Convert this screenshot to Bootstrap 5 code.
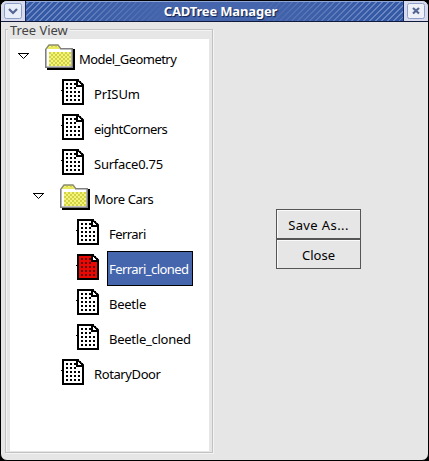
<!DOCTYPE html>
<html lang="en">
<head>
<meta charset="utf-8">
<title>CADTree Manager</title>
<link href="https://cdn.jsdelivr.net/npm/bootstrap@5.3.0/dist/css/bootstrap.min.css" rel="stylesheet">
<style>
body{background:#000;font:14px/20px "Noto Sans","Open Sans",sans-serif;color:#000;overflow:hidden}
.window{width:429px;height:461px;background:#e6e6e6;border:1px solid #000;border-radius:7px;overflow:hidden}
.titlebar{height:21px;background:#d7daec;border-bottom:1px solid #111a3a}
.ctl{width:24px;padding:2px 0 0 3px;flex:none}
.ctl svg{display:block}
.caption-area{border:solid #16275c;border-width:0 1px;color:#fff;font-weight:700;font-size:13px;letter-spacing:-.16px;padding-left:12px;text-shadow:1px 1px 1px #10204f;
 background:linear-gradient(90deg,transparent 5%,#4565ac 38%,#4565ac 60%,transparent 95%),repeating-linear-gradient(135deg,#3459a5 0 2px,#6d87c2 2px 3px,#3459a5 3px 4.24px);box-shadow:inset 0 1px #8fa6d8}
.tree-frame{width:208px;height:424px;margin:7px 0 0 4px;border:1px solid #c2c2c2;box-shadow:inset 1px 1px #f4f4f4,1px 1px #f4f4f4;padding:9px 2px 2px 4px}
.frame-title{left:2px;top:-6px;padding:0 2px;background:#e6e6e6;font-size:13px;line-height:13px;letter-spacing:-.05px;color:#444}
.tree{background:#fff;height:412px;width:199px;padding-top:2px}
.node{height:35px;padding-left:8px}
.level1{padding-left:52px}.level1.open{padding-left:23px}.level2{padding-left:67px}
.twist{width:12px;margin:12px 15px 0 0;flex:none}
.glyph{flex:none;margin-top:3px;overflow:visible}
.label{height:35px;padding:0 0 0 1px;border:1px solid transparent;margin-left:8px;white-space:nowrap;font-size:13px;line-height:34px;letter-spacing:-.35px}
.folder-label{margin-left:2px}
.chosen{background:#4565ac;border-color:#000;color:#fff;width:86px}
.sp0{letter-spacing:-.1px}.sp1{letter-spacing:-.25px}.sp2{letter-spacing:-.4px}.sp3{letter-spacing:-.55px}
.tool{width:85px;height:30px;border:1px solid #555;border-radius:0;background:#e6e6e6;box-shadow:inset 1px 1px #fafafa;padding:1px 0 0;font-size:13px;color:#000;line-height:28px}
.tool.wide{letter-spacing:.4px}
.tools{margin-left:63px;margin-top:187px}
</style>
</head>
<body>
<svg width="0" height="0" class="position-absolute">
<defs>
<pattern id="check" width="4" height="4" patternUnits="userSpaceOnUse"><path fill="#f4f47c" d="M0 0h4v4H0z"/><path fill="#d2d245" d="M0 0h2v2H0zM2 2h2v2H2z"/></pattern>
<symbol id="folder" viewBox="0 0 30 26"><path fill="#000" d="M2 24V26H30V5H28V24z"/><path fill="url(#check)" d="M1 5 4 1H13L16 5V9H1z"/><path fill="none" stroke="#8c8c70" stroke-width="1.4" d="M1 5 4 1H13L16 5"/><path fill="#fff" d="M1 5H27V23H1z"/><path fill="url(#check)" d="M4 8H26V22H4z"/><path fill="none" stroke="#808080" stroke-width="1.6" d="M15 4.8H27.2V23.2H.8V4.8"/><path fill="#e9e960" d="M3 3H14V5H3z"/></symbol>
<symbol id="sheet" viewBox="0 0 22 26" overflow="visible"><path stroke="#000" stroke-width="2" d="M1 1H15L21 6V25H1z"/><path fill="#000" d="M14 0H17V2H19V4H21V6H22V8H14z"/><path fill="#fff" d="M16 3H17V4H18V5H19V6H16z"/><path fill="none" stroke="currentColor" stroke-width="2" stroke-dasharray="2 2" d="M4 5H14M4 9H14M4 13H18M4 17H18M4 21H18"/><path fill="#000" d="M-1 11h1v1h-1z"/></symbol>
<symbol id="open" viewBox="0 0 12 7"><path fill="#fff" stroke="#000" d="M0 .5H11M1 1 5.5 5.5 10 1"/></symbol>
</defs></svg>
<main class="window">
<header class="titlebar d-flex">
<div class="ctl"><svg width="19" height="17"><rect x=".5" y=".5" width="17" height="15" rx="2" fill="#e9edf7" stroke="#8d9ec8"/><path d="M5 6 9 10 13 6" fill="none" stroke="#546594" stroke-width="2.2"/></svg></div>
<div class="caption-area flex-fill d-flex justify-content-center align-items-center"><span>CADTree Manager</span></div>
<div class="ctl"><svg width="19" height="17"><rect x=".5" y=".5" width="17" height="15" rx="2" fill="#eef0f7" stroke="#8d9ec8"/><path d="M6 5 12 10.5M12 5 6 10.5" stroke="#546594" stroke-width="2.2"/></svg></div>
</header>
<div class="d-flex align-items-start">
<section class="tree-frame position-relative">
<div class="frame-title position-absolute">Tree View</div>
<div class="tree">
<div class="node d-flex align-items-start"><svg class="twist" width="12" height="7"><use href="#open"/></svg><svg class="glyph" width="30" height="26"><use href="#folder"/></svg><div class="label folder-label sp3">Model_Geometry</div></div>
<div class="node level1 d-flex align-items-start"><svg class="glyph" fill="#fff" width="22" height="26"><use href="#sheet"/></svg><div class="label sp0">PrISUm</div></div>
<div class="node level1 d-flex align-items-start"><svg class="glyph" fill="#fff" width="22" height="26"><use href="#sheet"/></svg><div class="label sp3">eightCorners</div></div>
<div class="node level1 d-flex align-items-start"><svg class="glyph" fill="#fff" width="22" height="26"><use href="#sheet"/></svg><div class="label sp1">Surface0.75</div></div>
<div class="node level1 open d-flex align-items-start"><svg class="twist" width="12" height="7"><use href="#open"/></svg><svg class="glyph" width="30" height="26"><use href="#folder"/></svg><div class="label folder-label">More Cars</div></div>
<div class="node level2 d-flex align-items-start"><svg class="glyph" fill="#fff" width="22" height="26"><use href="#sheet"/></svg><div class="label sp3">Ferrari</div></div>
<div class="node level2 d-flex align-items-start"><svg class="glyph" fill="#ea0804" color="#5c0000" width="22" height="26"><use href="#sheet"/></svg><div class="label chosen sp3">Ferrari_cloned</div></div>
<div class="node level2 d-flex align-items-start"><svg class="glyph" fill="#fff" width="22" height="26"><use href="#sheet"/></svg><div class="label sp1">Beetle</div></div>
<div class="node level2 d-flex align-items-start"><svg class="glyph" fill="#fff" width="22" height="26"><use href="#sheet"/></svg><div class="label sp1">Beetle_cloned</div></div>
<div class="node level1 d-flex align-items-start"><svg class="glyph" fill="#fff" width="22" height="26"><use href="#sheet"/></svg><div class="label sp2">RotaryDoor</div></div>
</div>
</section>
<div class="tools d-flex flex-column">
<button class="btn tool wide">Save As...</button>
<button class="btn tool">Close</button>
</div>
</div>
</main>
<script src="https://cdn.jsdelivr.net/npm/bootstrap@5.3.0/dist/js/bootstrap.bundle.min.js"></script>
</body>
</html>
